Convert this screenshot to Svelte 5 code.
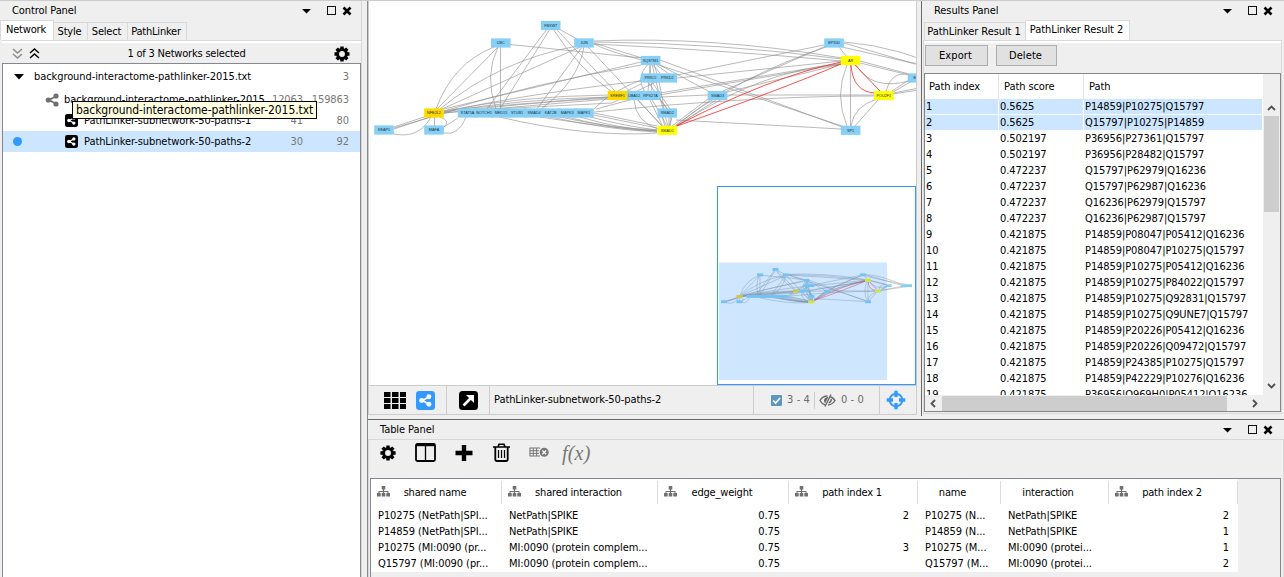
<script>
  const results = [
    ['0.5625', 'P14859|P10275|Q15797'], ['0.5625', 'Q15797|P10275|P14859'],
    ['0.502197', 'P36956|P27361|Q15797'], ['0.502197', 'P36956|P28482|Q15797'],
    ['0.472237', 'Q15797|P62979|Q16236'], ['0.472237', 'Q15797|P62987|Q16236'],
    ['0.472237', 'Q16236|P62979|Q15797'], ['0.472237', 'Q16236|P62987|Q15797'],
    ['0.421875', 'P14859|P08047|P05412|Q16236'], ['0.421875', 'P14859|P08047|P10275|Q15797'],
    ['0.421875', 'P14859|P10275|P05412|Q16236'], ['0.421875', 'P14859|P10275|P84022|Q15797'],
    ['0.421875', 'P14859|P10275|Q92831|Q15797'], ['0.421875', 'P14859|P10275|Q9UNE7|Q15797'],
    ['0.421875', 'P14859|P20226|P05412|Q16236'], ['0.421875', 'P14859|P20226|Q09472|Q15797'],
    ['0.421875', 'P14859|P24385|P10275|Q15797'], ['0.421875', 'P14859|P42229|P10276|Q16236'],
    ['0.421875', 'P36956|Q969H0|P05412|Q16236']
  ];

  const columns = [
    { name: 'shared name', icon: true }, { name: 'shared interaction', icon: true },
    { name: 'edge_weight', icon: true, num: true }, { name: 'path index 1', icon: true, num: true },
    { name: 'name' }, { name: 'interaction' }, { name: 'path index 2', icon: true, num: true }
  ];
  const rows = [
    ['P10275 (NetPath|SPI...', 'NetPath|SPIKE', '0.75', '2', 'P10275 (N...', 'NetPath|SPIKE', '2'],
    ['P14859 (NetPath|SPI...', 'NetPath|SPIKE', '0.75', '', 'P14859 (N...', 'NetPath|SPIKE', '1'],
    ['P10275 (MI:0090 (pr...', 'MI:0090 (protein complem...', '0.75', '3', 'P10275 (M...', 'MI:0090 (protei...', '1'],
    ['Q15797 (MI:0090 (pr...', 'MI:0090 (protein complem...', '0.75', '', 'Q15797 (M...', 'MI:0090 (protei...', '2']
  ];

  const B = '#87cff5', G = '#ffd800', Y = '#ffff00';
  const nodes = [
    ['UBC', 500.8, 43, B], ['FBXW7', 550.7, 25.5, B], ['JUN', 584, 43, B],
    ['KEAP1', 384, 130, B], ['MAFA', 434, 130, B], ['NFE2L2', 434, 113, G],
    ['STAT5A', 467.5, 113, B], ['NOTCH1', 484, 113, B], ['MED15', 501, 113, B], ['STUB1', 517, 113, B],
    ['SMAD4', 534, 113, B], ['KAT2B', 550.7, 113, B], ['MAPK3', 567.3, 113, B], ['MAPK1', 584, 113, B],
    ['SQSTM1', 650.6, 60.5, B], ['PRKCI', 650.6, 78, B], ['PRKD2', 667.3, 78, B],
    ['UBA52', 634, 95.5, B], ['SREBF1', 617.5, 95.5, G], ['RPS27A', 650.6, 95.5, B],
    ['SMAD2', 667.3, 113, B], ['SMAD1', 667.3, 130.3, Y], ['SMAD3', 717.5, 95.5, B],
    ['EP300', 834, 43, B], ['AR', 850.6, 60.5, Y], ['POU2F1', 883.8, 95.5, Y], ['SP1', 850.6, 130.3, B],
    ['EGR', 917.5, 78, B], ['', 967, 78, B], ['', 983.5, 78, B]
  ];
  const edges = [
    'M498 47L437 109', 'M494 47Q453 63 436 109', 'M500.5 47V110', 'M498 47Q484 75 496 109', 'M510 44.500L642 58',
    'M547 29L487 109', 'M550 29L500 109', 'M553 29Q578 68 612 92', 'M556 29L616 92', 'M559 29L577 39',
    'M577 46Q500 60 440 109', 'M580 47L442 109', 'M582 47L537 109', 'M584 47Q578 82 541 109',
    'M588 47L663 127', 'M594 41Q712 36 842 58', 'M594 42Q720 43 842 59', 'M594 44Q720 50 842 61',
    'M594 43L642 58', 'M594 44Q610 52 642 60',
    'M641 62L444 109', 'M641 65Q535 83 444 111', 'M641 81Q525 94 444 112',
    'M609 95Q520 96 444 111', 'M609 97Q520 99 444 112', 'M609 98Q520 103 444 113', 'M609 99L444 113', 'M641 97L596 109',
    'M641 80Q610 92 594 109', 'M641 84Q630 89 624 93', 'M660 80L612 103L475 110',
    'M430 117L394 129', 'M427 116L394 127', 'M394 128L458 109L609 97', 'M431 117Q419 139 394 134', 'M434.500 117V126',
    'M440 117Q451 121 444 127', 'M444 127L458 118', 'M466 117Q459 136 444 133',
    'M499 117Q590 138 657 133', 'M540 117Q610 128 657 131', 'M550 117Q610 130 657 132', 'M560 117Q610 128 657 130',
    'M567 117Q620 131 657 131', 'M580 117Q620 129 657 131', 'M590 117Q625 126 657 130',
    'M594 115L657 128', 'M594 113L657 126', 'M676 120L841 129', 'M594 112Q750 96 874 96',
    'M634 100Q636 122 658 129', 'M638 100L663 127', 'M650 65L652 92', 'M650 65L648 92', 'M648 64Q635 78 645 92',
    'M652 64Q660 100 668 126', 'M654 64Q660 82 664 109', 'M652 82L670 109', 'M648 82L667 109',
    'M650 100L663 127', 'M652 100Q663 117 667 127', 'M658 98Q675 113 670 127', 'M662 117L665 126', 'M669 117V126', 'M672 117L669 126',
    'M655 64L669 74', 'M652 64L660 73', 'M660 60L842 127', 'M656 64L845 127', 'M660 65L708 91',
    'M677 75L824 45', 'M677 78L842 61', 'M660 93L842 63', 'M659 95L842 64', 'M660 97L708 95',
    'M723 91L826 46', 'M727 92L842 64', 'M727 95H874', 'M708 99L672 126', 'M710 100L674 127', 'M716 100L675 127',
    'M676 125Q740 76 826 47', 'M677 126Q760 70 842 64',
    'M847 65Q834 95 847 126', 'M850.5 65V126', 'M878 100L855 126', 'M877 99Q854 106 851 126',
    'M839 47L846 56', 'M844 42Q900 46 959 75', 'M844 43L959 77', 'M842 47L908 62L975 74',
    'M860 61L909 74', 'M860 63L909 75', 'M856 65Q872 91 909 81',
    'M886 91Q891 72 907 74', 'M892 91L909 80', 'M893 92L912 81', 'M893 93L967 79', 'M893 94L975 81'
  ];
  const redEdges = ['M676 126Q770 77 841 62', 'M677 126Q780 90 841 64', 'M851 65Q853 92 875 93', 'M855 65L880 91'];

  const gear = (r, ri, n = 8) => {
    let d = '';
    for (let i = 0; i < n; i++) {
      const a = (i * 2 * Math.PI) / n;
      [[-0.3, ri], [-0.22, r], [0.22, r], [0.3, ri]].forEach(([o, q], k) => {
        d += `${i || k ? 'L' : 'M'}${(q * Math.sin(a + o)).toFixed(2)} ${(-q * Math.cos(a + o)).toFixed(2)}`;
      });
    }
    const h = r * 0.38;
    return `${d}ZM${-h} 0a${h} ${h} 0 1 0 ${2 * h} 0a${h} ${h} 0 1 0 ${-2 * h} 0Z`;
  };
</script>

{#snippet graph(labels)}
  <g fill="none" stroke="#8c8c8c" stroke-width={labels ? 0.6 : 1.3}>
    {#each edges as d}<path {d} />{/each}
  </g>
  <g fill="none" stroke="#ff3030" stroke-width={labels ? 0.85 : 1.6}>
    {#each redEdges as d}<path {d} />{/each}
  </g>
  {#each nodes as [label, x, y, fill]}
    <rect x={x - 9.8} y={y - 4.6} width="19.600" height="9.200" {fill} />
  {/each}
  {#if labels}
    {#each nodes.filter((n) => n[0]) as [label, x, y]}
      <text {x} y={y + 1.4} text-anchor="middle">{label}</text>
    {/each}
  {/if}
{/snippet}

{#snippet share(color)}
  <g fill={color} stroke={color}>
    <path d="M11 3.200L4 7L11 10.800" fill="none" stroke-width="1.800" />
    <circle cx="3.300" cy="7" r="2.600" stroke="none" /><circle cx="11" cy="3" r="2.600" stroke="none" /><circle cx="11" cy="11" r="2.600" stroke="none" />
  </g>
{/snippet}

{#snippet badge(size, color)}
  <svg width={size} height={size} viewBox="0 0 20 20"><rect width="20" height="20" rx="3.500" fill={color} />
    <g transform="translate(2.600 3)">{@render share('#fff')}</g></svg>
{/snippet}

{#snippet controls()}
  <svg class="controls" width="52" height="12" viewBox="0 0 52 12">
    <path d="M0 4H9L4.500 8.500Z" />
    <rect x="25.500" y="1.500" width="8" height="8" fill="none" stroke="#111" />
    <path d="M41.500 2.500L48.500 9.500M48.500 2.500L41.500 9.500" stroke="#000" stroke-width="2.600" />
  </svg>
{/snippet}

{#snippet tree()}
  <svg width="13" height="11" viewBox="0 0 13 11" fill="#707070"><path d="M4.700 0H8.300V3.500H7.100V5H11.500V7H13V10.500H9.300V7H10.500V6H7.100V7H8.300V10.500H4.700V7H5.900V6H2.500V7H3.700V10.500H0V7H1.500V5H5.900V3.500H4.700Z" /></svg>
{/snippet}

<main>
  <section class="control">
    <header class="title">Control Panel{@render controls()}</header>
    <nav class="tabs">
      <span class="tab on" style:width="52px">Network</span><span class="tab" style:width="33px">Style</span><span class="tab" style:width="39px">Select</span><span class="tab" style:width="58px">PathLinker</span>
    </nav>
    <div class="netbar">
      <svg width="32" height="12" viewBox="0 0 32 12" fill="none" stroke-width="1.500"><path d="M1 1L5.500 5L10 1M1 6L5.500 10L10 6" stroke="#8c8c8c" /><path d="M18 5L22.500 1L27 5M18 10L22.500 6L27 10" stroke="#000" /></svg>
      <span class="count">1 of 3 Networks selected</span>
      <svg width="16" height="16" viewBox="-8 -8 16 16"><path d={gear(7.7, 5.9)} fill-rule="evenodd" /></svg>
    </div>
    <div class="networks">
      <div class="net root"><svg class="fold" width="10" height="6" viewBox="0 0 10 6"><path d="M0 0H10L5 5.500Z" /></svg><span class="nm">background-interactome-pathlinker-2015.txt</span><span class="n2">3</span></div>
      <div class="net base"><svg class="shareicon" width="14" height="14" viewBox="0 0 14 14">{@render share('#707070')}</svg><span class="nm">background-interactome-pathlinker-2015</span><span class="n1">12063</span><span class="n2">159863</span></div>
      <div class="net sub">{@render badge(13, '#000')}<span class="nm">PathLinker-subnetwork-50-paths-1</span><span class="n1">41</span><span class="n2">80</span></div>
      <div class="net sub chosen"><i class="dot"></i>{@render badge(13, '#000')}<span class="nm">PathLinker-subnetwork-50-paths-2</span><span class="n1">30</span><span class="n2">92</span></div>
      <div class="tooltip">background-interactome-pathlinker-2015.txt</div>
    </div>
  </section>

  <div class="right">
    <div class="upper">
      <section class="view">
        <div class="canvas">
          <svg width="548" height="384" viewBox="369 1 548 384">{@render graph(true)}</svg>
          <div class="overview">
            <svg width="197" height="197" viewBox="718 187 197 197">
              <g transform="translate(605.500 261.600) scale(.3086)">{@render graph(false)}</g>
              <rect x="719" y="262.500" width="168" height="117.500" fill="#3399ff" fill-opacity=".24" />
            </svg>
          </div>
        </div>
        <footer class="viewbar">
          <div class="cell modes">
            <svg width="22" height="17" viewBox="0 0 22 17">{#each [0, 1, 2] as r}{#each [0, 1, 2] as c}<rect x={c * 8} y={r * 6} width="6.500" height="5" />{/each}{/each}</svg>
            {@render badge(19, '#3399ff')}
          </div>
          <div class="cell detach"><svg width="19" height="19" viewBox="0 0 19 19"><rect width="19" height="19" rx="3.500" /><path d="M4.500 14.500L12 7" stroke="#fff" stroke-width="2.600" /><path d="M7 4H15V12Z" fill="#fff" /></svg></div>
          <div class="cell name">PathLinker-subnetwork-50-paths-2</div>
          <div class="cell stats">
            <svg width="11" height="11" viewBox="0 0 11 11"><rect width="11" height="11" rx="1" fill="#5c97bf" /><path d="M2.200 5.500L4.600 8L9 3" fill="none" stroke="#fff" stroke-width="1.700" /></svg>
            <span class="st">3 - 4</span><i class="bar"></i>
            <svg width="17" height="13" viewBox="0 0 17 13" fill="none" stroke="#6b6b6b" stroke-width="1.400"><path d="M8.500 2Q3.500 2 1 6.500Q3 10 6 10.900M11 2.500Q14 3.500 16 6.500Q13.500 10.500 9 11M12 .5L6 12.500" /><path d="M8.500 3Q5 3.500 5 6.500Q5 8 6 9.500L9.500 3Z" fill="#6b6b6b" stroke="none" /><path d="M12.300 5Q12.500 7.500 9.800 9" /></svg>
            <span class="st">0 - 0</span>
          </div>
          <div class="cell fit"><svg width="20" height="20" viewBox="0 0 20 20" fill="none" stroke="#3399ff"><circle cx="10" cy="10" r="6.300" stroke-width="1.900" /><path d="M10 .7V7M10 13V19.300M.7 10H7M13 10H19.300" stroke-width="3.400" /></svg></div>
        </footer>
      </section>

      <section class="results">
        <header class="title">Results Panel{@render controls()}</header>
        <nav class="tabs">
          <span class="tab" style:width="100px">PathLinker Result 1</span><span class="tab on" style:width="103px">PathLinker Result 2</span>
        </nav>
        <div class="resbody">
          <div class="buttons"><button style:width="63px">Export</button><button style:width="61px">Delete</button></div>
          <div class="pathbox">
            <div class="pathtable">
              <div class="phead"><span>Path index</span><span>Path score</span><span>Path</span></div>
              {#each results as [score, path], i}
                <div class="prow" class:sel={i < 2}><span>{i + 1}</span><span>{score}</span><span class="pp">{path}</span></div>
              {/each}
            </div>
            <div class="vscroll">
              <svg width="9" height="6" viewBox="0 0 9 6"><path d="M1 5L4.500 1.500L8 5" /></svg>
              <i></i>
              <svg width="9" height="6" viewBox="0 0 9 6"><path d="M1 1L4.500 4.500L8 1" /></svg>
            </div>
            <div class="hscroll">
              <svg width="6" height="9" viewBox="0 0 6 9"><path d="M5 1L1.500 4.500L5 8" /></svg>
              <i></i>
              <svg width="6" height="9" viewBox="0 0 6 9"><path d="M1 1L4.500 4.500L1 8" /></svg>
            </div>
          </div>
        </div>
      </section>
    </div>

    <section class="tablepanel">
      <header class="title">Table Panel{@render controls()}</header>
      <div class="tbody">
        <div class="tools">
          <svg width="16" height="16" viewBox="-8 -8 16 16"><path d={gear(7.8, 5.8)} fill-rule="evenodd" /></svg>
          <svg width="21" height="19" viewBox="0 0 21 19" fill="none" stroke="#000"><rect x="1" y="1" width="19" height="17" rx="1.500" stroke-width="1.800" /><path d="M10.500 2V18" stroke-width="1.300" /><path d="M1 2H20" stroke-width="2.400" /></svg>
          <svg width="18" height="18" viewBox="0 0 18 18"><path d="M6.800 1H11.200V6.800H17.500V11.200H11.200V17H6.800V11.200H.5V6.800H6.800Z" /></svg>
          <svg width="17" height="19" viewBox="0 0 17 19" fill="none" stroke="#000"><path d="M0 4H17M5 4L6 1.200H11L12 4" stroke-width="1.600" /><path d="M2.300 4V16.500Q2.300 18 4 18H13Q14.700 18 14.700 16.500V4" stroke-width="1.800" /><path d="M5.500 7V15M8.500 7V15M11.500 7V15" stroke-width="1.200" /></svg>
          <svg width="20" height="11" viewBox="0 0 20 11" fill="none" stroke="#777"><path d="M.5 1H11M.5 3.700H10M.5 6.400H10M.5 9H11M1 1V9M4.300 1V9M7.600 1V9" /><circle cx="15.200" cy="5.300" r="4.500" fill="#777" stroke="none" /><path d="M13.300 3.400L17.100 7.200M17.100 3.400L13.300 7.200" stroke="#fff" stroke-width="1.300" /></svg>
          <span class="fx">f(x)</span>
        </div>
        <div class="grid">
          <div class="trow thead">{#each columns as c}<span class:plain={!c.icon}>{#if c.icon}{@render tree()}{/if}<b>{c.name}</b></span>{/each}</div>
          {#each rows as r}
            <div class="trow">{#each r as v, i}<span class:num={columns[i].num}>{v}</span>{/each}</div>
          {/each}
        </div>
      </div>
    </section>
  </div>
</main>

<style>
  :global(body) { margin: 0; background: #efefef; }
  main, main * { box-sizing: border-box; }
  main { width: 1284px; height: 577px; display: grid; grid-template-columns: 367px 917px; overflow: hidden; border-top: 1px solid #ccc; background: #efefef; color: #000; font: 11px/16px "DejaVu Sans Condensed", "DejaVu Sans", sans-serif; letter-spacing: -.08px; white-space: nowrap; }
  svg { display: block; flex: none; }
  .title { display: flex; align-items: center; height: 19px; padding-left: 12px; }
  .controls { margin-left: auto; }
  .tabs { display: flex; align-items: flex-end; height: 20px; }
  main .tab { border: 1px solid #d9d9d9; border-bottom: 0; margin-left: -1px; box-sizing: content-box; height: 17px; line-height: 17px; text-align: center; text-indent: -2px; }
  main .tab.on { background: #fff; height: 19px; line-height: 18px; }

  .control { width: 362px; height: 577px; border-right: 1px solid #d6d6d6; }
  .control .tabs { padding-left: 1px; letter-spacing: -.2px; }
  .control .title .controls { margin-right: 7px; }
  .netbar { display: flex; align-items: center; height: 23px; margin-left: 2px; border-top: 1px solid #d9d9d9; box-shadow: inset 0 2px #fff; padding: 3px 11px 0 10px; }
  .count { flex: 1; text-align: center; padding-right: 5px; letter-spacing: -.2px; }
  .networks { position: relative; height: 514px; margin: 0 0 0 2px; width: 359px; border: 1px solid #828790; border-bottom: 0; background: #fff; }
  .net { display: flex; align-items: center; height: 21px; padding-right: 11px; }
  .net .nm { flex: 1; }
  .net .n1, .net .n2 { color: #777; text-align: right; }
  .net .n2 { width: 46px; }
  .net.root { height: 25px; }
  .fold { margin: 0 10px 0 11px; }
  .shareicon { margin: 0 5px 0 42px; }
  .sub { padding-left: 62px; }
  .sub .nm { padding-left: 6px; }
  .sub.chosen { background: #cce6ff; padding-left: 10px; }
  .dot { width: 9px; height: 9px; border-radius: 50%; background: #3399ff; margin-right: 43px; }
  .tooltip { position: absolute; left: 69px; top: 37px; width: 245px; height: 18px; border: 1px solid #000; background: #ffffe1; padding-left: 3px; font-size: 12px; line-height: 17px; letter-spacing: -.08px; }

  .right { display: flex; flex-direction: column; border-left: 1px solid #8a8a8a; }
  .upper { display: flex; height: 417px; }
  .view { width: 549px; height: 414px; border-left: 1px solid #ccc; border-right: 1px solid #ccc; border-bottom: 1px solid #ccc; }
  .canvas { position: relative; height: 384px; background: #fff; overflow: hidden; }
  .canvas text { font: 3.8px "Liberation Sans", sans-serif; letter-spacing: 0; fill: #13303c; }
  .overview { position: absolute; right: 0; bottom: 0; width: 199px; height: 199px; border: 1px solid #3399ff; background: #fff; }
  .viewbar { display: flex; height: 29px; border-top: 1px solid #ccc; }
  .cell { display: flex; align-items: center; border-right: 1px solid #ccc; }
  .modes { width: 78px; padding-left: 15px; gap: 10px; }
  .detach { width: 43px; padding-left: 12px; }
  .name { flex: 1; padding-left: 4px; }
  .stats { width: 126px; padding-left: 17px; color: #6b6b6b; }
  .st { letter-spacing: .1px; padding-left: 5px; }
  .bar { width: 1px; height: 17px; background: #ccc; margin: 0 4px 0 4px; }
  .fit { width: 36px; padding-left: 6px; border: 0; }

  .results { width: 363px; height: 415px; margin-left: 4px; border-left: 1px solid #696969; padding-left: 1px; }
  .results .title { padding-left: 11px; }
  .results .controls { margin-right: 9px; }
  .results .tabs { padding-left: 2px; }
  .resbody { width: 359px; height: 374px; border: 1px solid #d9d9d9; box-shadow: inset 0 2px #fff; }
  .buttons { display: flex; gap: 8px; padding: 4px 0 0 1px; }
  button { height: 21px; border: 1px solid #adadad; background: #e1e1e1; padding: 0 2px 0 0; color: #000; font: inherit; letter-spacing: .1px; }
  .pathbox { display: grid; grid-template: 321px 16px / 1fr 17px; width: 357px; height: 339px; margin-top: 7px; border: 1px solid #828790; }
  .pathtable { overflow: hidden; background: #fff; }
  .phead, .prow { display: grid; grid-template-columns: 74px 85px 1fr; height: 16px; }
  .phead { height: 25px; line-height: 26px; }
  .phead span { padding-left: 4px; border-right: 1px solid #e5e5e5; }
  .phead span + span { padding-left: 5px; }
  .phead span:last-child { border: 0; }
  .prow span { padding-left: 1px; height: 15px; line-height: 15px; margin-right: 1px; }
  .sel span { background: #cce6ff; }
  .vscroll { display: flex; flex-direction: column; align-items: center; padding-top: 31px; }
  .vscroll i { width: 15px; height: 96px; background: #cdcdcd; margin-top: 5px; }
  .vscroll svg:last-child { margin: auto 0 6px; }
  .vscroll path, .hscroll path { fill: none; stroke: #505050; stroke-width: 1.800; }
  .hscroll { display: flex; align-items: center; padding-left: 5px; }
  .hscroll i { width: 285px; height: 15px; background: #cdcdcd; margin: 0 25px 0 6px; }

  .tablepanel { flex: 1; margin-top: 1px; border-top: 1px solid #696969; }
  .tablepanel .controls { margin-right: 9px; }
  .tbody { border: 1px solid #d9d9d9; height: 140px; width: 916px; }
  .tools { display: flex; align-items: center; height: 38px; padding: 0 0 13px 11px; }
  .tools svg:nth-child(2) { margin-left: 19px; }
  .tools svg:nth-child(3) { margin-left: 19px; }
  .tools svg:nth-child(4) { margin-left: 20px; }
  .tools svg:nth-child(5) { margin-left: 19px; }
  .fx { margin-left: 13px; color: #777; font: italic 20px/24px "Liberation Serif", serif; letter-spacing: .2px; }
  .grid { border: 1px solid #828790; border-bottom: 0; width: 911px; margin-left: 1px; height: 110px; }
  .trow { display: grid; grid-template-columns: 131px 156px 131px 129px 83px 108px 129px; width: 867px; height: 16px; background: #fff; }
  .trow span { padding-left: 7px; }
  .trow .num { text-align: right; padding-right: 9px; }
  .thead { height: 29px; padding-top: 2px; }
  .thead span { display: flex; height: 23px; align-items: center; border-right: 1px solid #dcdcdc; }
  .thead span svg { margin: -3px 0 0 -1px; }
  .thead b { flex: 1; text-align: center; font-weight: 400; padding-right: 21px; letter-spacing: -.2px; }
  .thead .plain b { padding-right: 20px; }
</style>
